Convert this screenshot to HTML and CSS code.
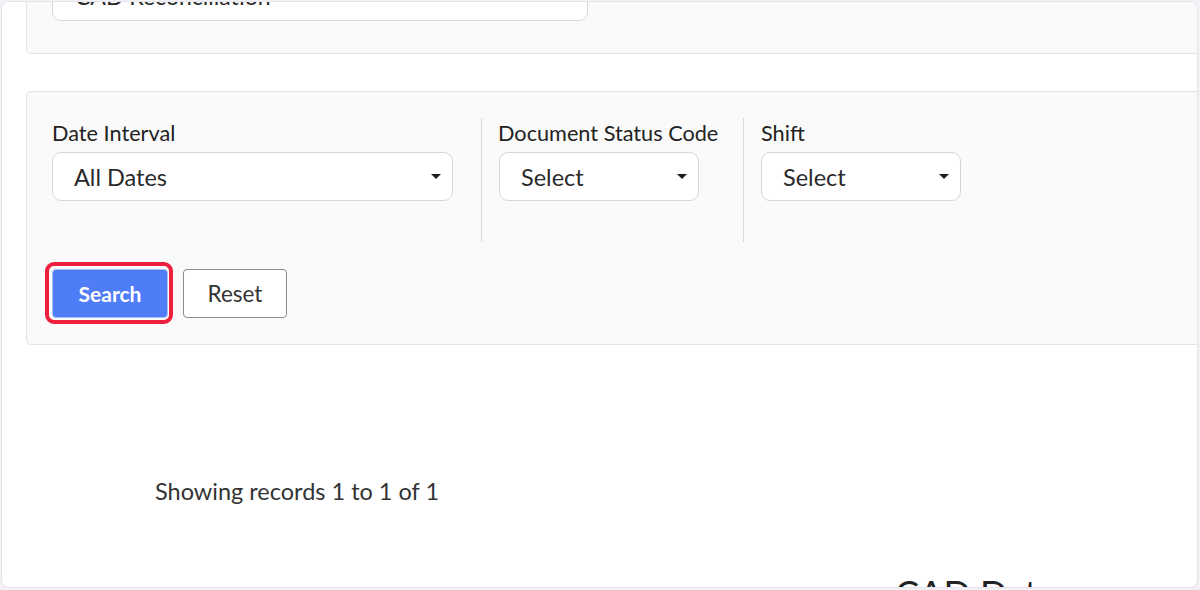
FILE: index.html
```html
<!DOCTYPE html>
<html lang="en">
<head>
<meta charset="utf-8">
<title>CAD Reconciliation</title>
<link rel="stylesheet" href="styles.css">
</head>
<body>
<div class="card">
  <div class="scroll">
    <section class="panel panel-top">
      <div class="text-input">CAD Reconciliation</div>
    </section>

    <section class="panel panel-filters">
      <div class="filters">
        <div class="col col1">
          <div class="label">Date Interval</div>
          <div class="select sel-wide"><span>All Dates</span><i class="caret"></i></div>
        </div>
        <div class="col col2">
          <div class="label">Document Status Code</div>
          <div class="select sel-narrow"><span>Select</span><i class="caret"></i></div>
        </div>
        <div class="col col3">
          <div class="label">Shift</div>
          <div class="select sel-narrow"><span>Select</span><i class="caret"></i></div>
        </div>
      </div>
      <div class="actions">
        <div class="search-wrap">
          <button class="btn btn-search">Search</button>
          <span class="highlight"></span>
        </div>
        <button class="btn btn-reset">Reset</button>
      </div>
    </section>

    <p class="records">Showing records 1 to 1 of 1</p>
    <h2 class="heading">CAD Data</h2>
  </div>
</div>
</body>
</html>
```

FILE: styles.css
```css
html, body {
  margin: 0;
  padding: 0;
}
body {
  width: 1200px;
  height: 590px;
  overflow: hidden;
  background: #f1f1f6;
  font-family: Lato, "Liberation Sans", sans-serif;
  color: #262626;
}
.card {
  margin: 1px 0 0 1px;
  width: 1197px;
  height: 587px;
  box-sizing: border-box;
  border: 1px solid #e4e4ec;
  border-radius: 8px;
  background: #fff;
  overflow: hidden;
}
.scroll {
  margin-top: -57px;
}
.panel {
  margin-left: 24px;
  width: 1300px;
  box-sizing: border-box;
  border: 1px solid #e3e3e3;
  border-radius: 5px;
  background: #fafafa;
}
.panel-top {
  padding: 26px 25px 32px;
}
.text-input {
  width: 536px;
  height: 49px;
  box-sizing: border-box;
  border: 1px solid #d6d6d6;
  border-radius: 9px;
  background: #fff;
  padding-left: 22px;
  font-size: 23px;
  line-height: 47px;
  color: #262626;
}
.panel-filters {
  margin-top: 37px;
  padding: 26px 25px 26px;
}
.filters {
  display: flex;
}
.col {
  height: 124px;
  box-sizing: border-box;
}
.col1 {
  width: 430px;
  border-right: 1px solid #d9d9d9;
}
.col2 {
  width: 262px;
  padding-left: 16px;
  border-right: 1px solid #d9d9d9;
}
.col3 {
  padding-left: 17px;
}
.label {
  font-size: 21.7px;
  line-height: 30px;
  margin-bottom: 4px;
  color: #222;
  white-space: nowrap;
}
.select {
  height: 49px;
  box-sizing: border-box;
  border: 1px solid #d6d6d6;
  border-radius: 9px;
  background: #fff;
  display: flex;
  align-items: center;
  justify-content: space-between;
  padding: 0 11px 0 21px;
  font-size: 23.5px;
  color: #2a2a2a;
}
.sel-wide {
  width: 401px;
}
.sel-narrow {
  width: 200px;
}
.col2 .sel-narrow {
  margin-left: 1px;
}
.caret {
  width: 0;
  height: 0;
  border-left: 5px solid transparent;
  border-right: 5px solid transparent;
  border-top: 5px solid #1e1e1e;
}
.actions {
  display: flex;
  gap: 15px;
  margin-top: 27px;
}
.search-wrap {
  position: relative;
}
.btn {
  height: 49px;
  box-sizing: border-box;
  font-family: Lato, "Liberation Sans", sans-serif;
  border-radius: 4px;
  padding: 0;
  cursor: pointer;
}
.btn-search {
  width: 116px;
  background: #4f7df8;
  border: 1px solid #a9bffb;
  color: #fff;
  font-size: 21px;
  font-weight: 700;
}
.highlight {
  position: absolute;
  top: -7px;
  left: -7px;
  right: -5px;
  bottom: -6px;
  border: 4px solid #ec1f3c;
  border-radius: 9px;
  pointer-events: none;
}
.btn-reset {
  width: 104px;
  background: #fff;
  border: 1px solid #8c8c8c;
  color: #333;
  font-size: 22.5px;
}
.records {
  margin: 131px 0 0 153px;
  font-size: 23.5px;
  line-height: 30px;
  color: #333;
}
.heading {
  margin: 67px 0 0 893px;
  font-size: 36px;
  line-height: 40px;
  font-weight: 400;
  color: #222;
  white-space: nowrap;
}
```
